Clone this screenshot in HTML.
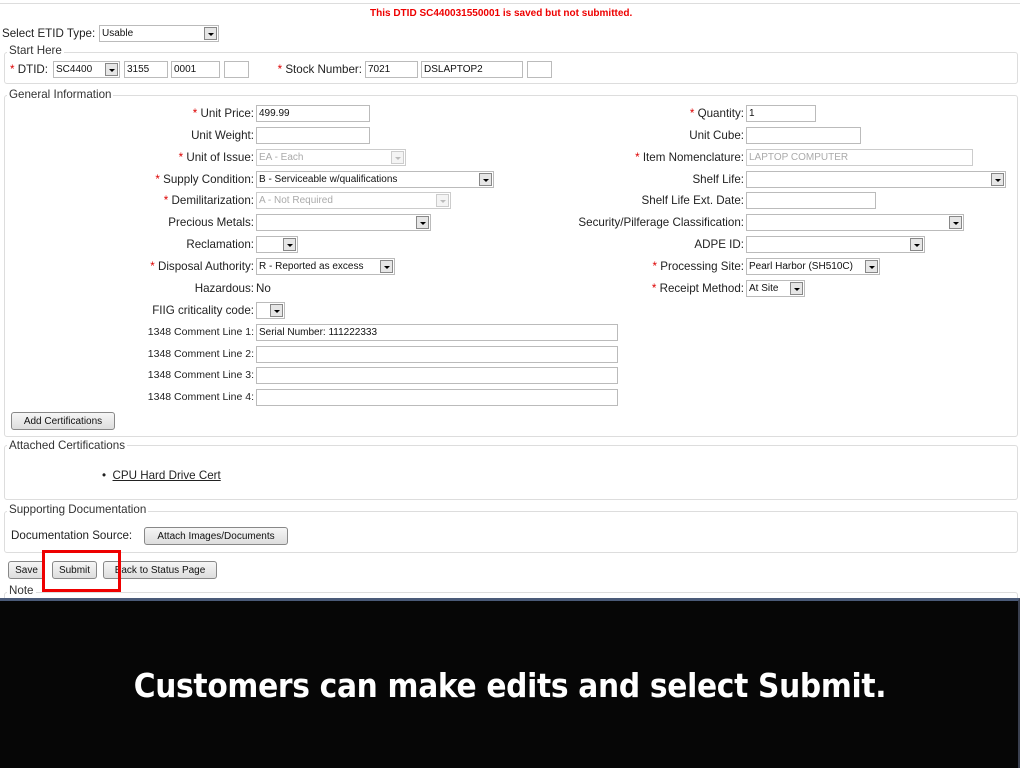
<!DOCTYPE html>
<html><head><meta charset="utf-8"><style>
*{box-sizing:border-box;margin:0;padding:0}
body{width:1024px;height:768px;background:#fff;position:relative;overflow:hidden;font-family:"Liberation Sans",sans-serif;font-size:11.6px;color:#222}
.a{position:absolute;white-space:nowrap}
.l{position:absolute;white-space:nowrap;text-align:right;line-height:17px;font-size:11.6px}
.s{color:#d00}
.i{position:absolute;height:17px;border:1px solid #bbb;background:#fff;font-size:10px;line-height:16px;padding-left:2px;color:#111;white-space:nowrap;overflow:hidden}
.d{color:#aaa;border-color:#ccc}
.dd{position:absolute;right:1px;top:1px;width:13px;height:13px;background:#e6e6e6;border:1px solid #888}
.dd:after{content:"";position:absolute;left:3px;top:5px;border-left:3px solid transparent;border-right:3px solid transparent;border-top:3px solid #000}
.dd.x{border-color:#ccc;background:#f4f4f4}.dd.x:after{border-top-color:#bbb}
.fs{position:absolute;border:1px solid #ddd;border-radius:3px}
.lg{position:absolute;background:#fff;padding:0 2px;font-size:11.6px;line-height:12px;color:#333}
.b{position:absolute;height:18px;border:1px solid #888;border-radius:3px;background:linear-gradient(#f6f6f6,#ddd);font-size:10px;line-height:17px;text-align:center;color:#111}
</style></head><body>
<div class="a" style="left:0;top:3px;width:1020px;border-top:1px solid #ddd"></div>
<div class="a" style="left:370px;top:8px;color:#e00;font-weight:bold;font-size:10px">This DTID SC440031550001 is saved but not submitted.</div>
<div class="a" style="left:2px;top:27px">Select ETID Type:</div>
<div class="i" style="left:99px;top:25px;width:120px">Usable<div class="dd"></div></div>

<div class="fs" style="left:4px;top:52px;width:1014px;height:32px"></div>
<div class="lg" style="left:7px;top:45px">Start Here</div>
<div class="a" style="left:10px;top:63px"><span class="s">*</span> DTID:</div>
<div class="i" style="left:53px;top:61px;width:67px">SC4400<div class="dd"></div></div>
<div class="i" style="left:124px;top:61px;width:44px">3155</div>
<div class="i" style="left:171px;top:61px;width:49px">0001</div>
<div class="i" style="left:224px;top:61px;width:25px"></div>
<div class="l" style="right:662px;top:61px"><span class="s">*</span> Stock Number:</div>
<div class="i" style="left:365px;top:61px;width:53px">7021</div>
<div class="i" style="left:421px;top:61px;width:102px">DSLAPTOP2</div>
<div class="i" style="left:527px;top:61px;width:25px"></div>

<div class="fs" style="left:4px;top:95px;width:1014px;height:342px"></div>
<div class="lg" style="left:7px;top:89px">General Information</div>

<div class="l" style="right:770px;top:105px"><span class="s">*</span> Unit Price:</div>
<div class="i" style="left:256px;top:105px;width:114px">499.99</div>
<div class="l" style="right:770px;top:127px">Unit Weight:</div>
<div class="i" style="left:256px;top:127px;width:114px"></div>
<div class="l" style="right:770px;top:149px"><span class="s">*</span> Unit of Issue:</div>
<div class="i d" style="left:256px;top:149px;width:150px">EA - Each<div class="dd x"></div></div>
<div class="l" style="right:770px;top:171px"><span class="s">*</span> Supply Condition:</div>
<div class="i" style="left:256px;top:171px;width:238px">B - Serviceable w/qualifications<div class="dd"></div></div>
<div class="l" style="right:770px;top:192px"><span class="s">*</span> Demilitarization:</div>
<div class="i d" style="left:256px;top:192px;width:195px">A - Not Required<div class="dd x"></div></div>
<div class="l" style="right:770px;top:214px">Precious Metals:</div>
<div class="i" style="left:256px;top:214px;width:175px"><div class="dd"></div></div>
<div class="l" style="right:770px;top:236px">Reclamation:</div>
<div class="i" style="left:256px;top:236px;width:42px"><div class="dd"></div></div>
<div class="l" style="right:770px;top:258px"><span class="s">*</span> Disposal Authority:</div>
<div class="i" style="left:256px;top:258px;width:139px">R - Reported as excess<div class="dd"></div></div>
<div class="l" style="right:770px;top:280px">Hazardous:</div>
<div class="a" style="left:256px;top:282px">No</div>
<div class="l" style="right:770px;top:302px">FIIG criticality code:</div>
<div class="i" style="left:256px;top:302px;width:29px"><div class="dd"></div></div>
<div class="l" style="right:770px;top:324px;font-size:10.5px">1348 Comment Line 1:</div>
<div class="i" style="left:256px;top:324px;width:362px">Serial Number: 111222333</div>
<div class="l" style="right:770px;top:346px;font-size:10.5px">1348 Comment Line 2:</div>
<div class="i" style="left:256px;top:346px;width:362px"></div>
<div class="l" style="right:770px;top:367px;font-size:10.5px">1348 Comment Line 3:</div>
<div class="i" style="left:256px;top:367px;width:362px"></div>
<div class="l" style="right:770px;top:389px;font-size:10.5px">1348 Comment Line 4:</div>
<div class="i" style="left:256px;top:389px;width:362px"></div>

<div class="l" style="right:280px;top:105px"><span class="s">*</span> Quantity:</div>
<div class="i" style="left:746px;top:105px;width:70px">1</div>
<div class="l" style="right:280px;top:127px">Unit Cube:</div>
<div class="i" style="left:746px;top:127px;width:115px"></div>
<div class="l" style="right:280px;top:149px"><span class="s">*</span> Item Nomenclature:</div>
<div class="i d" style="left:746px;top:149px;width:227px">LAPTOP COMPUTER</div>
<div class="l" style="right:280px;top:171px">Shelf Life:</div>
<div class="i" style="left:746px;top:171px;width:260px"><div class="dd"></div></div>
<div class="l" style="right:280px;top:192px">Shelf Life Ext. Date:</div>
<div class="i" style="left:746px;top:192px;width:130px"></div>
<div class="l" style="right:280px;top:214px">Security/Pilferage Classification:</div>
<div class="i" style="left:746px;top:214px;width:218px"><div class="dd"></div></div>
<div class="l" style="right:280px;top:236px">ADPE ID:</div>
<div class="i" style="left:746px;top:236px;width:179px"><div class="dd"></div></div>
<div class="l" style="right:280px;top:258px"><span class="s">*</span> Processing Site:</div>
<div class="i" style="left:746px;top:258px;width:134px">Pearl Harbor (SH510C)<div class="dd"></div></div>
<div class="l" style="right:280px;top:280px"><span class="s">*</span> Receipt Method:</div>
<div class="i" style="left:746px;top:280px;width:59px">At Site<div class="dd"></div></div>

<div class="b" style="left:11px;top:412px;width:104px">Add Certifications</div>

<div class="fs" style="left:4px;top:445px;width:1014px;height:55px"></div>
<div class="lg" style="left:7px;top:440px">Attached Certifications</div>
<div class="a" style="left:102px;top:469px">•&nbsp;&nbsp;<span style="text-decoration:underline">CPU Hard Drive Cert</span></div>

<div class="fs" style="left:4px;top:511px;width:1014px;height:42px"></div>
<div class="lg" style="left:7px;top:504px">Supporting Documentation</div>
<div class="a" style="left:11px;top:529px">Documentation Source:</div>
<div class="b" style="left:144px;top:527px;width:144px">Attach Images/Documents</div>

<div class="b" style="left:8px;top:561px;width:37px">Save</div>
<div class="b" style="left:52px;top:561px;width:45px">Submit</div>
<div class="b" style="left:103px;top:561px;width:114px">Back to Status Page</div>
<div class="a" style="left:42px;top:550px;width:79px;height:42px;border:3px solid #e00"></div>
<div class="fs" style="left:4px;top:592px;width:1014px;height:20px"></div>
<div class="lg" style="left:7px;top:585px">Note</div>

<div class="a" style="left:0;top:598px;width:1020px;height:170px;background:#060606;border-top:3px solid #4a5a78;border-right:2px solid #3a4050"></div>
<div class="a" style="left:0;top:666px;width:1020px;text-align:center;color:#fff;font-weight:bold;font-size:33px;font-family:'DejaVu Sans Condensed','Liberation Sans',sans-serif;letter-spacing:-0.3px">Customers can make edits and select Submit.</div>
</body></html>
